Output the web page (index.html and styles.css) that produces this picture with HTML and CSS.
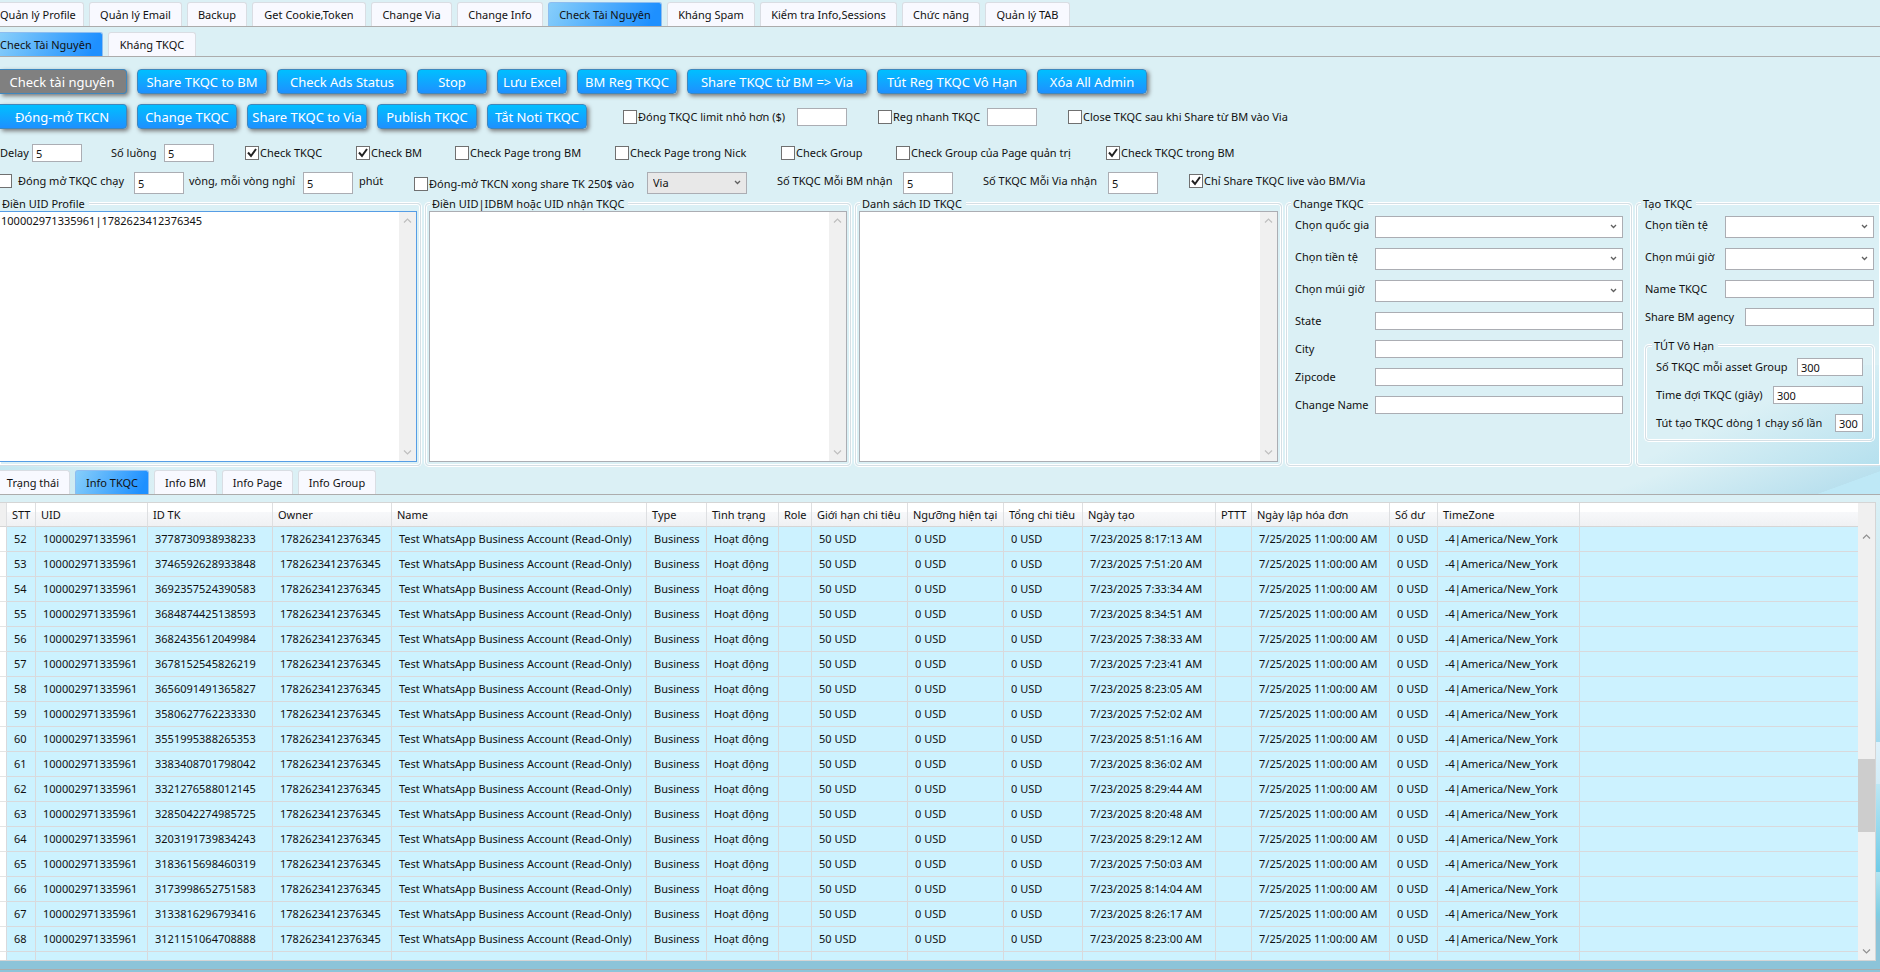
FILE: index.html
```html
<!DOCTYPE html>
<html lang="vi">
<head>
<meta charset="utf-8">
<title>Check Tài Nguyên</title>
<link rel="stylesheet" href="styles.css">
</head>
<body>
<div class="app">
  <nav class="tabs tabs-main">
    <button class="tab first">Quản lý Profile</button>
    <button class="tab">Quản lý Email</button>
    <button class="tab">Backup</button>
    <button class="tab">Get Cookie,Token</button>
    <button class="tab">Change Via</button>
    <button class="tab">Change Info</button>
    <button class="tab active">Check Tài Nguyên</button>
    <button class="tab">Kháng Spam</button>
    <button class="tab">Kiểm tra Info,Sessions</button>
    <button class="tab">Chức năng</button>
    <button class="tab">Quản lý TAB</button>
  </nav>
  <nav class="tabs tabs-sub">
    <button class="tab first active">Check Tài Nguyên</button>
    <button class="tab">Kháng TKQC</button>
  </nav>

  <div class="actions actions-top">
    <button class="action busy">Check tài nguyên</button>
    <button class="action">Share TKQC to BM</button>
    <button class="action">Check Ads Status</button>
    <button class="action">Stop</button>
    <button class="action">Lưu Excel</button>
    <button class="action">BM Reg TKQC</button>
    <button class="action">Share TKQC từ BM =&gt; Via</button>
    <button class="action">Tút Reg TKQC Vô Hạn</button>
    <button class="action">Xóa All Admin</button>
  </div>
  <div class="actions actions-bottom">
    <button class="action">Đóng-mở TKCN</button>
    <button class="action">Change TKQC</button>
    <button class="action">Share TKQC to Via</button>
    <button class="action">Publish TKQC</button>
    <button class="action">Tắt Noti TKQC</button>
    <label class="check limit"><input type="checkbox">Đóng TKQC limit nhỏ hơn ($)</label>
    <input class="box" type="text" aria-label="Limit">
    <label class="check"><input type="checkbox">Reg nhanh TKQC</label>
    <input class="box" type="text" aria-label="Số lượng reg">
    <label class="check"><input type="checkbox">Close TKQC sau khi Share từ BM vào Via</label>
  </div>

  <div class="options options-check">
    <label class="edge" for="delay">Delay</label>
    <input class="box" id="delay" type="text" value="5">
    <label for="threads">Số luồng</label>
    <input class="box" id="threads" type="text" value="5">
    <label class="check"><input type="checkbox" checked>Check TKQC</label>
    <label class="check"><input type="checkbox" checked>Check BM</label>
    <label class="check"><input type="checkbox">Check Page trong BM</label>
    <label class="check"><input type="checkbox">Check Page trong Nick</label>
    <label class="check"><input type="checkbox">Check Group</label>
    <label class="check"><input type="checkbox">Check Group của Page quản trị</label>
    <label class="check"><input type="checkbox" checked>Check TKQC trong BM</label>
  </div>
  <div class="options options-run">
    <label class="check spaced edge"><input type="checkbox">Đóng mở TKQC chạy</label>
    <input class="box tall" type="text" value="5" aria-label="Số vòng">
    <label for="rest">vòng, mỗi vòng nghỉ</label>
    <input class="box tall" id="rest" type="text" value="5">
    <span>phút</span>
    <label class="check low"><input type="checkbox">Đóng-mở TKCN xong share TK 250$ vào</label>
    <select class="pick grey" aria-label="Nơi nhận"><option>Via</option></select>
    <label for="perbm">Số TKQC Mỗi BM nhận</label>
    <input class="box tall" id="perbm" type="text" value="5">
    <label for="pervia">Số TKQC Mỗi Via nhận</label>
    <input class="box tall" id="pervia" type="text" value="5">
    <label class="check"><input type="checkbox" checked>Chỉ Share TKQC live vào BM/Via</label>
  </div>

  <main class="panels">
    <fieldset class="group flush">
      <legend>Điền UID Profile</legend>
      <div class="memo focused"><textarea aria-label="Điền UID Profile" id="uids">100002971335961|1782623412376345</textarea><span class="bar"><svg viewBox="0 0 9 5"><path d="M1 4.500 4.500 1 8 4.500"/></svg><svg viewBox="0 0 9 5"><path d="M1 .5 4.500 4 8 .5"/></svg></span></div>
    </fieldset>
    <fieldset class="group">
      <legend>Điền UID|IDBM hoặc UID nhận TKQC</legend>
      <div class="memo"><textarea aria-label="Điền UID|IDBM hoặc UID nhận TKQC"></textarea><span class="bar"><svg viewBox="0 0 9 5"><path d="M1 4.500 4.500 1 8 4.500"/></svg><svg viewBox="0 0 9 5"><path d="M1 .5 4.500 4 8 .5"/></svg></span></div>
    </fieldset>
    <fieldset class="group">
      <legend>Danh sách ID TKQC</legend>
      <div class="memo"><textarea aria-label="Danh sách ID TKQC"></textarea><span class="bar"><svg viewBox="0 0 9 5"><path d="M1 4.500 4.500 1 8 4.500"/></svg><svg viewBox="0 0 9 5"><path d="M1 .5 4.500 4 8 .5"/></svg></span></div>
    </fieldset>
    <fieldset class="group">
      <legend>Change TKQC</legend>
      <div class="form form-change">
        <label for="country">Chọn quốc gia</label><select class="pick" id="country"></select>
        <label for="currency">Chọn tiền tệ</label><select class="pick" id="currency"></select>
        <label for="zone">Chọn múi giờ</label><select class="pick" id="zone"></select>
        <label for="state">State</label><input class="box" id="state" type="text">
        <label for="city">City</label><input class="box" id="city" type="text">
        <label for="zip">Zipcode</label><input class="box" id="zip" type="text">
        <label for="rename">Change Name</label><input class="box" id="rename" type="text">
      </div>
    </fieldset>
    <fieldset class="group create">
      <legend>Tạo TKQC</legend>
      <div class="form form-create">
        <label for="ccurrency">Chọn tiền tệ</label><select class="pick" id="ccurrency"></select>
        <label for="czone">Chọn múi giờ</label><select class="pick" id="czone"></select>
        <label for="cname">Name TKQC</label><input class="box" id="cname" type="text">
        <div class="line agency"><label for="agency">Share BM agency</label><input class="box" id="agency" type="text"></div>
      </div>
      <fieldset class="group inner">
        <legend>TÚT Vô Hạn</legend>
        <div class="line w-asset"><label for="asset">Số TKQC mỗi asset Group</label><input class="box" id="asset" type="text" value="300"></div>
        <div class="line w-wait"><label for="wait">Time đợi TKQC (giây)</label><input class="box" id="wait" type="text" value="300"></div>
        <div class="line w-runs"><label for="runs">Tút tạo TKQC dòng 1 chạy số lần</label><input class="box" id="runs" type="text" value="300"></div>
      </fieldset>
    </fieldset>
  </main>

  <nav class="tabs tabs-info">
    <button class="tab first">Trạng thái</button>
    <button class="tab active">Info TKQC</button>
    <button class="tab">Info BM</button>
    <button class="tab">Info Page</button>
    <button class="tab">Info Group</button>
  </nav>

  <section class="data">
    <div class="sheet">
      <div class="scroll">
      <table>
        <colgroup><col class="c-mark"><col class="c-stt"><col class="c-uid"><col class="c-id"><col class="c-owner"><col class="c-name"><col class="c-type"><col class="c-status"><col class="c-role"><col class="c-limit"><col class="c-limit"><col class="c-total"><col class="c-made"><col class="c-pttt"><col class="c-bill"><col class="c-left"><col class="c-zone"><col></colgroup>
        <thead><tr><th></th><th>STT</th><th>UID</th><th>ID TK</th><th>Owner</th><th>Name</th><th>Type</th><th>Tình trạng</th><th>Role</th><th>Giới hạn chi tiêu</th><th>Ngưỡng hiện tại</th><th>Tổng chi tiêu</th><th>Ngày tạo</th><th>PTTT</th><th>Ngày lập hóa đơn</th><th>Số dư</th><th>TimeZone</th><th></th></tr></thead>
        <tbody id="rows"></tbody>
      </table>
      </div>
      <div class="bar wide"><svg viewBox="0 0 9 5"><path d="M1 4.500 4.500 1 8 4.500"/></svg><i class="thumb"></i><svg viewBox="0 0 9 5"><path d="M1 .5 4.500 4 8 .5"/></svg></div>
    </div>
  </section>
  <footer class="foot"></footer>
</div>
<script src="app.js"></script>
</body>
</html>
```
FILE: app.js
```js
const accounts = [
  ["3778730938938233", "8:17:13"], ["3746592628933848", "7:51:20"],
  ["3692357524390583", "7:33:34"], ["3684874425138593", "8:34:51"],
  ["3682435612049984", "7:38:33"], ["3678152545826219", "7:23:41"],
  ["3656091491365827", "8:23:05"], ["3580627762233330", "7:52:02"],
  ["3551995388265353", "8:51:16"], ["3383408701798042", "8:36:02"],
  ["3321276588012145", "8:29:44"], ["3285042274985725", "8:20:48"],
  ["3203191739834243", "8:29:12"], ["3183615698460319", "7:50:03"],
  ["3173998652751583", "8:14:04"], ["3133816296793416", "8:26:17"],
  ["3121151064708888", "8:23:00"], ["3108204068903670", "8:27:25"]
];
const firstNumber = 52;
document.getElementById("rows").innerHTML = accounts.map(([id, time], i) => {
  const cells = ["", firstNumber + i, "100002971335961", id, "1782623412376345",
    "Test WhatsApp Business Account (Read-Only)", "Business", "Hoạt động", "",
    "50 USD", "0 USD", "0 USD", "7/23/2025 " + time + " AM", "",
    "7/25/2025 11:00:00 AM", "0 USD", "-4|America/New_York", ""];
  return "<tr>" + cells.map(c => "<td>" + c + "</td>").join("") + "</tr>";
}).join("");
const uids = document.getElementById("uids");
uids.focus();
uids.setSelectionRange(uids.value.length, uids.value.length);
```
FILE: styles.css
```css
* { box-sizing: border-box; }
html, body { height: 100%; }
body {
  margin: 0;
  overflow: hidden;
  background: #dbf0f5;
  color: #111;
  font: 11px/16px "Noto Sans", "Open Sans", sans-serif;
}
button, input, select, textarea { font: inherit; color: inherit; margin: 0; border-radius: 0; }
.app { height: 100%; display: flex; flex-direction: column; white-space: nowrap; }

/* Tab strips */
.tabs { display: grid; gap: 5px; height: 25px; border-bottom: 1px solid #acacac; flex: none; }
.tabs-main { grid-template-columns: 84px 93px 60px 114px 81px 86px 114px 88px 137px 78px 85px; margin-top: 2px; }
.tabs-sub { grid-template-columns: 103px 88px; margin-top: 5px; }
.tabs-info {
  grid-template-columns: 70px 74px 63px 71px 78px;
  padding-top: 4px;
  height: 29px;
  background:
    linear-gradient(160deg, transparent 62%, #bee8f6 63%) right / 90px 100% no-repeat,
    linear-gradient(160deg, transparent 20%, #b5deed 90%) right / 270px 100% no-repeat,
    linear-gradient(90deg, #c5e7f0, transparent) left / 160px 100% no-repeat;
}
.tab {
  background: #f8f9ff;
  border: 1px solid #d9dde3;
  border-bottom: 0;
  border-radius: 3px 3px 0 0;
  padding: 0;
  text-align: center;
}
.tab.first { border-left: 0; border-top-left-radius: 0; padding-right: 12px; }
.tab.active { background: linear-gradient(115deg, #87cefa, #1e90ff 90%); border-color: #8dbdf0; }
.tabs-info .first { padding-right: 3px; }

/* Action buttons */
.actions { display: grid; height: 25px; flex: none; align-items: center; }
.actions-top { margin-top: 12px; gap: 10px; grid-template-columns: 127px 130px 130px 70px 70px 100px 180px 150px 110px; }
.actions-bottom { margin-top: 10px; column-gap: 10px; grid-template-columns: 127px 100px 120px 100px 100px 190px 71px 99px 71px auto; }
.action {
  height: 25px;
  padding: 0;
  border: 1px solid #3f87bd;
  border-radius: 4px;
  background: linear-gradient(#00bfff, #1e90ff);
  color: #fff;
  font-size: 13px;
  box-shadow: 2px 2px 4px #777;
}
.actions .action:first-child { border-left: 0; border-radius: 0 4px 4px 0; padding-right: 2px; }
.action.busy { background: #808080; }
.check { display: flex; align-items: center; }
.check.limit { padding-left: 26px; }
.check input {
  appearance: none;
  width: 14px;
  height: 14px;
  flex: none;
  border: 1px solid #707070;
  background: #fff;
  margin-right: 1px;
}
.check input:checked {
  background: #fff url("data:image/svg+xml,%3Csvg xmlns='http://www.w3.org/2000/svg' viewBox='0 0 12 12'%3E%3Cpath d='M2 5.500 5 9 10 2' fill='none' stroke='%23212121' stroke-width='2'/%3E%3C/svg%3E");
}
.box {
  width: 50px;
  height: 18px;
  padding: 0 0 0 3px;
  border: 1px solid #abadb3;
  background: #fff;
  outline: 0;
}
.tall { height: 22px; }

/* Option rows */
.options { display: grid; flex: none; align-items: center; }
.options-check { height: 18px; margin-top: 15px; grid-template-columns: 32px 79px 53px 81px 111px 99px 160px 166px 115px 210px auto; }
.options-check .edge { text-align: right; padding-right: 6px; }
.options-run { height: 22px; margin-top: 10px; grid-template-columns: 134px 55px 114px 56px 55px 233px 130px 126px 80px 125px 81px auto; }
.options-run > :not(.box, .pick) { margin-bottom: 4px; }
.options-run > .low { margin-bottom: 0; margin-top: 1px; }
.spaced { overflow: hidden; }
.spaced input { width: 12px; border-left: 0; margin-right: 6px; }
.pick {
  appearance: none;
  height: 22px;
  width: 100%;
  padding: 0 0 0 5px;
  border: 1px solid #abadb3;
  outline: 0;
  background: #fff url("data:image/svg+xml,%3Csvg xmlns='http://www.w3.org/2000/svg' viewBox='0 0 7 5'%3E%3Cpath d='M1 1 3.500 3.500 6 1' fill='none' stroke='%23606060' stroke-width='1.300'/%3E%3C/svg%3E") no-repeat right 5px top 7px / 7px 5px;
}
.pick.grey { width: 100px; background-color: #e8e8e8; }

/* Group boxes */
.panels { display: grid; flex: none; margin-top: 2px; column-gap: 4px; grid-template-columns: 421fr 426fr 427fr 346fr 244fr; }
.group {
  min-width: 0;
  margin: 0;
  padding: 0 3px 3px;
  border: 1px solid #d5dfe5;
  border-radius: 4px;
  box-shadow: 0 0 0 1px #fff, inset 0 0 0 1px #fff;
}
.group legend { padding: 0 4px 0 2px; margin-left: 1px; background: #dbf0f5; line-height: 15px; }
.flush { border-left: 0; border-radius: 0 4px 4px 0; padding-left: 0; }
.flush legend { margin-left: 0; }
.create {
  border-right: 0;
  border-radius: 4px 0 0 4px;
  background: linear-gradient(155deg, transparent 45%, #b5e0ee) right bottom / 240px 100px no-repeat;
}
.memo { display: flex; height: 251px; border: 1px solid #abadb3; background: #fff; }
.memo textarea { flex: 1; min-width: 0; border: 0; padding: 1px 2px; resize: none; outline: 0; background: none; }
.focused { border-color: #569de5; border-left: 0; }
.focused textarea { padding-left: 1px; }
.bar { width: 17px; flex: none; background: #f0f0f0; display: flex; flex-direction: column; justify-content: space-between; align-items: center; padding: 6px 0; }
.bar svg { width: 9px; height: 5px; fill: none; stroke: #bfbfbf; stroke-width: 1.200; }
.form { display: grid; row-gap: 10px; padding: 5px 5px 0 5px; align-items: start; }
.form > label { margin-top: 1px; }
.form-change { grid-template-columns: 80px 1fr; }
.form-create { grid-template-columns: 80px 1fr; padding-right: 3px; }
.form .box, .line .box { width: 100%; }
.line { display: grid; align-items: center; }
.agency { grid-column: 1 / -1; grid-template-columns: 100px 1fr; }
.inner { margin: 12px 3px 0 5px; padding: 5px 10px 8px; display: grid; row-gap: 10px; }
.inner legend { margin-left: -4px; }
.w-asset { grid-template-columns: 1fr 66px; }
.w-wait { grid-template-columns: 1fr 90px; }
.w-runs { grid-template-columns: 1fr 28px; }

/* Result table */
.data {
  flex: 1;
  min-height: 0;
  padding: 7px 4px 0 0;
  background: linear-gradient(#dbf0f5 0, #bfe6f3 40%, #a4daee 53%, #dff1fa 53%, #d3ecf7 62%, #bde7f4 62%, #6fcbe7 81%, #b5e5f1 81%, #7fcde2 90%, #8cc4d9 92%) right / 4px 100% no-repeat;
}
.sheet { height: 100%; display: flex; border: 1px solid #d5d5d5; border-left: 0; background: #fff; }
.scroll { flex: 1; min-width: 0; overflow: hidden; }
table { width: 100%; table-layout: fixed; border-collapse: separate; border-spacing: 0; }
th { height: 24px; padding: 0 0 0 5px; font-weight: 400; text-align: left; background: linear-gradient(#fff 40%, #f7f8fa 41%, #f0f1f3); border-right: 1px solid #dedfe1; border-bottom: 1px solid #d5d5d5; }
td { height: 25px; padding: 0 0 0 7px; background: #ccf2ff; border-right: 1px solid #d9d9dc; border-bottom: 1px solid #d9d9dc; }
td:first-child { background: #fff; border-bottom-color: #e4e4e4; }
th:first-child { background: #f0f0f0; }
td:last-child, th:last-child { border-right: 0; }
.c-mark { width: 7px; }
.c-stt { width: 29px; }
.c-uid { width: 112px; }
.c-id { width: 125px; }
.c-owner { width: 119px; }
.c-name { width: 255px; }
.c-type { width: 60px; }
.c-status { width: 72px; }
.c-role { width: 33px; }
.c-limit { width: 96px; }
.c-total { width: 79px; }
.c-made { width: 133px; }
.c-pttt { width: 36px; }
.c-bill { width: 138px; }
.c-left { width: 48px; }
.c-zone { width: 142px; }
.wide { position: relative; padding: 31px 0 6px; }
.wide svg { stroke: #909090; }
.thumb { position: absolute; top: 56%; left: 0; width: 100%; height: 16%; background: #cdcdcd; }
.foot { flex: none; height: 11px; background: linear-gradient(#8cc4d9 8px, #acacac 8px, #acacac 9px, #8cc4d9 9px); }
```
